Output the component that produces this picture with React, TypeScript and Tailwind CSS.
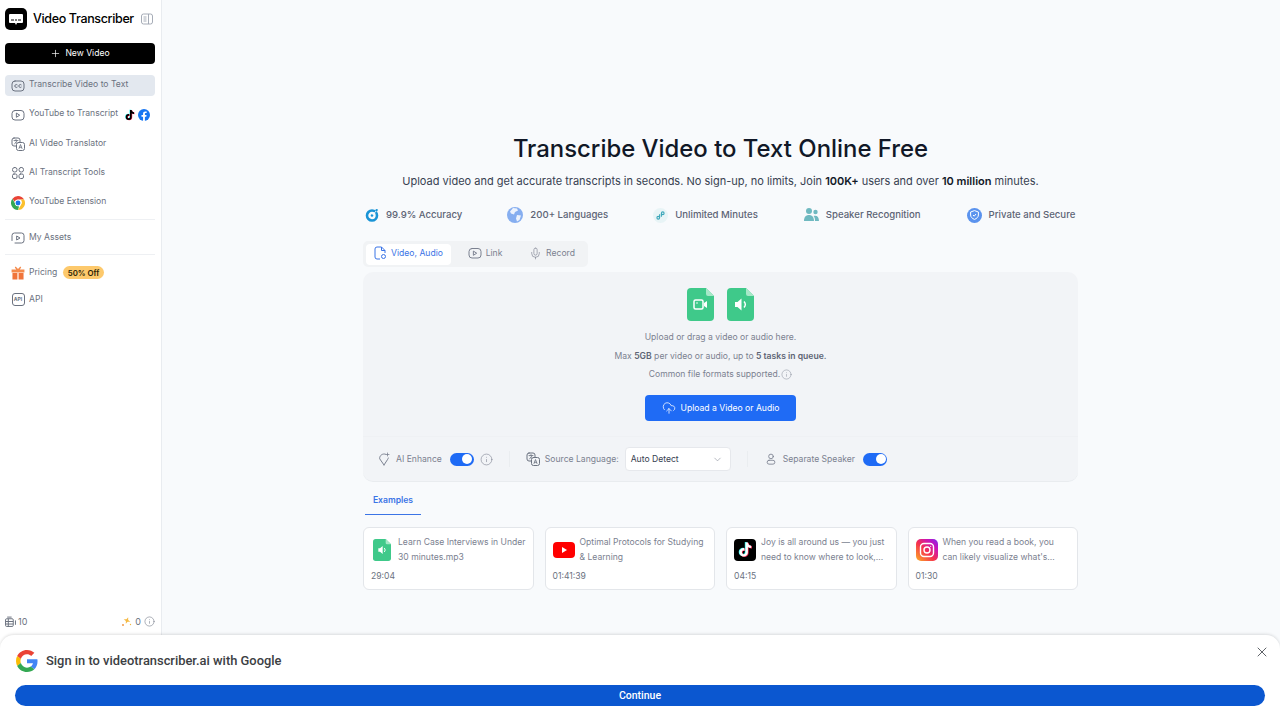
import React from "react";
import { Plus, X, ChevronDown, Info, Mic, CloudUpload } from "lucide-react";

const tiktokPath = "M12 2h3.400c.3 2.600 1.800 4.300 4.600 4.600V10c-1.800 0-3.300-.5-4.600-1.500V16a6 6 0 1 1-6-6c.4 0 .7 0 1 .1v3.500a2.600 2.600 0 1 0 1.600 2.400z";

const GoogleG = ({ size = 22 }: { size?: number }) => (
  <svg width={size} height={size} viewBox="0 0 48 48">
    <path fill="#EA4335" d="M24 9.500c3.540 0 6.710 1.220 9.210 3.600l6.850-6.850C35.900 2.380 30.470 0 24 0 14.620 0 6.510 5.380 2.560 13.220l7.980 6.190C12.430 13.720 17.740 9.500 24 9.500z" />
    <path fill="#4285F4" d="M46.980 24.550c0-1.570-.15-3.090-.38-4.550H24v9.020h12.940c-.58 2.960-2.260 5.480-4.780 7.180l7.730 6c4.510-4.180 7.090-10.360 7.090-17.650z" />
    <path fill="#FBBC05" d="M10.530 28.590c-.48-1.450-.76-2.990-.76-4.590s.27-3.140.76-4.590l-7.980-6.190C.92 16.460 0 20.120 0 24c0 3.880.92 7.540 2.560 10.780l7.970-6.190z" />
    <path fill="#34A853" d="M24 48c6.480 0 11.930-2.130 15.890-5.810l-7.730-6c-2.150 1.450-4.920 2.300-8.160 2.300-6.260 0-11.570-4.220-13.470-9.910l-7.980 6.190C6.510 42.620 14.620 48 24 48z" />
  </svg>
);

const TikTok = ({ size = 12, fill = "#000" }: { size?: number; fill?: string }) => (
  <svg width={size} height={size} viewBox="0 0 24 24">
    <path fill="#25F4EE" d={tiktokPath} transform="translate(-1 -.6)" />
    <path fill="#FE2C55" d={tiktokPath} transform="translate(1 .6)" />
    <path fill={fill} d={tiktokPath} />
  </svg>
);

const Facebook = () => (
  <svg width={12} height={12} viewBox="0 0 24 24">
    <circle cx="12" cy="12" r="12" fill="#1877F2" />
    <path fill="#fff" d="M16.600 15.500l.5-3.500h-3.300V9.800c0-1 .5-1.900 2-1.900h1.500V5c-.9-.1-1.800-.2-2.700-.2-2.700 0-4.500 1.700-4.500 4.600V12H7v3.500h3.100V24h3.700v-8.500z" />
  </svg>
);

const Chrome = () => (
  <svg width={14} height={14} viewBox="0 0 24 24">
    <path fill="#EA4335" d="M12 0a12 12 0 0 1 10.400 6H12a6 6 0 0 0-5.600 3.800L2.500 4.700A12 12 0 0 1 12 0z" />
    <path fill="#FBC02D" d="M22.400 6A12 12 0 0 1 12 24l4.900-8.700A6 6 0 0 0 16 6z" />
    <path fill="#34A853" d="M2.500 4.700l4.900 8.900a6 6 0 0 0 6.500 4.100L12 24A12 12 0 0 1 2.500 4.700z" />
    <circle cx="12" cy="12" r="5.400" fill="#fff" />
    <circle cx="12" cy="12" r="4.200" fill="#1A73E8" />
  </svg>
);

const Gift = () => (
  <svg width={14} height={14} viewBox="0 0 24 24">
    <path fill="#F58A4B" d="M8 1l4 4 4-4 1.500 1.500L15 6h8v5H1V6h8L6.500 2.500z" />
    <path fill="#F0743A" d="M2.500 12h8.500v11H2.500zM13 12h8.500v11H13z" />
  </svg>
);

const Line = ({ size = 14, children }: { size?: number; children: React.ReactNode }) => (
  <svg width={size} height={size} viewBox="0 0 14 14" fill="none" stroke="currentColor" strokeWidth="1" strokeLinecap="round" strokeLinejoin="round" className="shrink-0">
    {children}
  </svg>
);

const CcIcon = () => (
  <Line>
    <rect x="1" y="2" width="12" height="10" rx="3" />
    <path d="M6.200 5.800a1.500 1.500 0 1 0 0 2.400M10.200 5.800a1.500 1.500 0 1 0 0 2.400" />
  </Line>
);

const PlayBox = ({ size = 14 }: { size?: number }) => (
  <Line size={size}>
    <rect x="1" y="2.500" width="12" height="9.500" rx="3" />
    <path d="M5.700 5.300l3 1.900-3 1.900z" />
  </Line>
);

const TranslateIcon = ({ backing = "#fff" }: { backing?: string }) => (
  <Line>
    <rect x="1" y="1" width="8" height="8" rx="2" />
    <path d="M3 3.500h4M5 2.500v1M3.500 7l2.500-3M6.500 7L4.500 5" strokeWidth=".8" />
    <rect x="5.500" y="5.500" width="8" height="8" rx="2" fill={backing} />
    <path d="M8 11.500l1.500-4 1.500 4M8.500 10.300h2" strokeWidth=".8" />
  </Line>
);

const ToolsIcon = () => (
  <Line>
    <rect x="1.500" y="1.500" width="4.500" height="4.500" rx="2" />
    <rect x="8" y="1.500" width="4.500" height="4.500" rx="2" />
    <rect x="1.500" y="8" width="4.500" height="4.500" rx="1.500" />
    <rect x="8" y="8" width="4.500" height="4.500" rx="1.500" />
  </Line>
);

const AssetsIcon = () => (
  <Line>
    <path d="M1 9.500V4.500a2.500 2.500 0 0 1 2.500-2.500h7A2.500 2.500 0 0 1 13 4.500v5a2.500 2.500 0 0 1-2.500 2.500H4" />
    <path d="M6 5.200l3 1.800-3 1.800z" />
  </Line>
);

const PanelIcon = () => (
  <span className="ml-[7px] text-[#9ca3af]">
    <svg width={12} height={12} viewBox="0 0 12 12" fill="none" stroke="currentColor" strokeWidth=".9">
      <rect x=".5" y="1" width="11" height="10" rx="2" />
      <path d="M7.500 1v10M2.500 4h3M2.500 6h3M2.500 8h3" />
    </svg>
  </span>
);

const NavItem = ({ icon, label, active, lift, right }: { icon: React.ReactNode; label: string; active?: boolean; lift?: boolean; right?: React.ReactNode }) => (
  <div className={`flex h-[21px] items-center gap-[4px] rounded-[4px] px-[6px] ${active ? "bg-[#e3e8ef]" : ""}`}>
    <span className="flex h-[14px] w-[14px] shrink-0 items-center justify-center text-[#6b7280]">{icon}</span>
    <span className={`whitespace-nowrap text-[8.600px] leading-none text-[#6b7280] ${lift ? "pb-[2px]" : ""}`}>{label}</span>
    {right}
  </div>
);

const Feature = ({ icon, label, className = "" }: { icon: React.ReactNode; label: string; className?: string }) => (
  <div className={`flex items-center gap-[7px] ${className}`}>
    {icon}
    <span className="whitespace-nowrap text-[9.600px] font-medium text-[#5d6475]">{label}</span>
  </div>
);

const FileBadge = ({ children, small }: { children: React.ReactNode; small?: boolean }) => (
  <svg width={small ? 18 : 27} height={small ? 22 : 33} viewBox="0 0 27 33">
    <path fill="#3FC98A" d="M4 0h15l8 8v21a4 4 0 0 1-4 4H4a4 4 0 0 1-4-4V4a4 4 0 0 1 4-4z" />
    <path fill="#A6E8C8" d="M19 0l8 8h-6a2 2 0 0 1-2-2z" />
    {children}
  </svg>
);

const SpeakerGlyph = () => (
  <g fill="#fff">
    <path d="M8 14h2.500l4-3.500v12l-4-3.500H8z" />
    <path d="M17 13.500a4.500 4.500 0 0 1 0 6" stroke="#fff" strokeWidth="1.400" fill="none" />
  </g>
);

const Toggle = () => (
  <span className="flex h-[13px] w-[24px] items-center justify-end rounded-full bg-[#1f6bf5] pr-[1.500px]">
    <span className="h-[10px] w-[10px] rounded-full bg-white" />
  </span>
);

const ExampleCard = ({ icon, title, time }: { icon: React.ReactNode; title: string; time: string }) => (
  <div className="flex h-[63px] flex-1 flex-col justify-between rounded-[6px] border border-[#e3e6ea] bg-white pb-[8px] pl-[7px] pr-[6px] pt-[7px]">
    <div className="flex items-center gap-[5px]">
      <span className="flex w-[22px] shrink-0 justify-center">{icon}</span>
      <p className="text-[8.600px] leading-[14.500px] text-[#7b8190]">{title}</p>
    </div>
    <span className="text-[8.600px] leading-none text-[#6b7280]">{time}</span>
  </div>
);

export default function App() {
  return (
    <div className="relative flex h-[720px] w-[1280px] overflow-hidden bg-[#f8fafc] font-['Inter',sans-serif]">
      <aside className="flex h-full w-[162px] shrink-0 flex-col border-r border-[#e9ecf0] bg-white pb-[92px]">
        <div className="flex h-[36px] items-center pl-[5px] pt-[2px]">
          <span className="flex h-[22px] w-[22px] items-center justify-center rounded-[5px] bg-black">
            <svg width={14} height={11} viewBox="0 0 14 11">
              <path fill="#fff" d="M1 0h12a1 1 0 0 1 1 1v7a1 1 0 0 1-1 1H8l-1 2-1-2H1a1 1 0 0 1-1-1V1a1 1 0 0 1 1-1z" />
              <path stroke="#000" strokeWidth="1" d="M2 6h3M6 6h2M9 6h3" />
            </svg>
          </span>
          <span className="ml-[6px] whitespace-nowrap text-[12.500px] font-medium tracking-[-0.35px] text-black">Video Transcriber</span>
          <PanelIcon />
        </div>
        <div className="pl-[5px] pr-[6px]">
          <div className="mt-[7px] flex h-[21px] items-center justify-center gap-[4px] rounded-[4px] bg-black text-white">
            <Plus size={11} strokeWidth={1.500} />
            <span className="text-[8.600px]">New Video</span>
          </div>
          <div className="mt-[11px] flex flex-col gap-[8.250px]">
            <NavItem lift active icon={<CcIcon />} label="Transcribe Video to Text" />
            <NavItem
              lift
              icon={<PlayBox />}
              label="YouTube to Transcript"
              right={
                <span className="-mr-[1px] ml-auto flex items-center gap-[2px]">
                  <TikTok />
                  <Facebook />
                </span>
              }
            />
            <NavItem lift icon={<TranslateIcon />} label="AI Video Translator" />
            <NavItem lift icon={<ToolsIcon />} label="AI Transcript Tools" />
            <NavItem lift icon={<Chrome />} label="YouTube Extension" />
          </div>
          <div className="mb-[7px] mt-[6px] h-px bg-[#eef0f3]" />
          <NavItem icon={<AssetsIcon />} label="My Assets" />
          <div className="mb-[7px] mt-[6px] h-px bg-[#eef0f3]" />
          <NavItem
            icon={<Gift />}
            label="Pricing"
            right={<span className="ml-[2px] rounded-full bg-[#fdc96c] px-[4.500px] py-[1.500px] text-[7.800px] font-semibold leading-[10px] text-[#2a1d05]">50% Off</span>}
          />
          <div className="mt-[6px]">
            <NavItem
              icon={<span className="flex h-[13px] w-[13px] items-center justify-center rounded-[3px] border border-[#6b7280] text-[5px] font-bold">API</span>}
              label="API"
            />
          </div>
        </div>
        <div className="mt-auto flex items-center justify-between pl-[5px] pr-[6px] text-[9px] text-[#6b7280]">
          <span className="flex items-center gap-[2px]">
            <svg width={11} height={11} viewBox="0 0 10 10" fill="none" stroke="currentColor" strokeWidth=".9">
              <path d="M2 1h4" />
              <rect x=".5" y="2.500" width="7" height="7" rx="1" />
              <path d="M.5 5h7M.5 7.300h7M3 2.500v7" />
              <path d="M9.500 4v4" />
            </svg>
            10
          </span>
          <span className="flex items-center gap-[3px]">
            <svg width={11} height={11} viewBox="0 0 11 11" fill="#f5b942">
              <path d="M6 1l.9 2.600L9.500 4.500 6.900 5.400 6 8 5.100 5.400 2.500 4.500 5.100 3.600z" transform="rotate(20 6 4.500)" />
              <circle cx="2" cy="9" r="1" fill="#f29a4a" />
              <circle cx="9.500" cy="8.500" r=".7" />
            </svg>
            0
            <Info size={11} strokeWidth={1.200} />
          </span>
        </div>
      </aside>

      <main className="flex flex-1 justify-center pr-[1px] pt-[134px]">
        <div className="flex w-[715px] flex-col">
          <h1 className="text-center text-[23.900px] font-medium leading-[30px] text-[#111827]">Transcribe Video to Text Online Free</h1>
          <p className="mt-[8px] text-center text-[11px] leading-[18px] text-[#374151]">
            Upload video and get accurate transcripts in seconds. No sign-up, no limits, Join <b className="font-semibold text-[#111827]">100K+</b> users and over <b className="font-semibold text-[#111827]">10 million</b> minutes.
          </p>
          <div className="mt-[17px] flex items-center gap-[45px] pl-[2px]">
            <Feature
              label="99.9% Accuracy"
              icon={
                <svg width={14} height={14} viewBox="0 0 14 14">
                  <circle cx="7" cy="7.500" r="5" fill="none" stroke="#1a94d6" strokeWidth="2.600" />
                  <circle cx="7" cy="7.500" r="1.300" fill="#1a94d6" />
                  <path d="M8 6.500L12.500 1.500" stroke="#f8fafc" strokeWidth="1" />
                  <path d="M10.500 3l.3-2 2 .3-.3 1.900z" fill="#1a94d6" />
                </svg>
              }
            />
            <Feature
              label="200+ Languages"
              icon={
                <svg width={16} height={16} viewBox="0 0 16 16">
                  <circle cx="8" cy="8" r="8" fill="#86aef0" />
                  <path fill="#fff" d="M6 1l4 .5 1 2-3 1.500-1 2.500-3-1-1-2zM10 8l4 .5-1.500 4.500-2.500 1.500-1-3z" opacity=".85" />
                </svg>
              }
            />
            <Feature
              label="Unlimited Minutes"
              icon={
                <span className="flex h-[15px] w-[15px] items-center justify-center rounded-full bg-[#e8f4f6]">
                  <svg width={9} height={9} viewBox="0 0 10 10" fill="none" stroke="#3aa6b9" strokeWidth="1.200">
                    <circle cx="2.500" cy="7.500" r="1.500" />
                    <circle cx="7.500" cy="2.500" r="1.500" />
                    <path d="M4 7.500V3.500M6 2.500v4" />
                  </svg>
                </span>
              }
            />
            <Feature
              className="ml-[1px]"
              label="Speaker Recognition"
              icon={
                <svg width={15} height={14} viewBox="0 0 15 14" fill="#6fb9c0">
                  <circle cx="5" cy="3" r="3" />
                  <circle cx="11.500" cy="4" r="2.200" />
                  <path d="M0 13c0-4 2-6 5-6s5 2 5 6zM11 13c0-2.500-.5-4-1.500-5 3-1 5.500.5 5.500 5z" />
                </svg>
              }
            />
            <Feature
              className="ml-[1px]"
              label="Private and Secure"
              icon={
                <span className="flex h-[15px] w-[15px] items-center justify-center rounded-full bg-[#5b93ee]">
                  <svg width={9} height={10} viewBox="0 0 9 10" fill="none" stroke="#fff" strokeWidth="1">
                    <path d="M4.500.6L8.400 2v3c0 2-1.600 3.500-3.900 4.400C2.200 8.500.6 7 .6 5V2z" />
                    <path d="M3 5l1.200 1.200L6 4" />
                  </svg>
                </span>
              }
            />
          </div>

          <div className="mt-[18px] flex h-[26px] w-[225px] items-center self-start rounded-[5px] bg-[#f1f3f5] px-[3px] text-[8.600px]">
            <span className="flex h-[21px] w-[85px] items-center justify-center gap-[4px] rounded-[4px] bg-white pb-[2px] text-[#3b74e6]">
              <svg width={13} height={14} viewBox="0 0 13 14" fill="none" stroke="currentColor" strokeWidth="1" strokeLinejoin="round">
                <path d="M6 13H3a2 2 0 0 1-2-2V3a2 2 0 0 1 2-2h4.500L11 4.500V7" />
                <path d="M7.500 1v3.500H11" />
                <circle cx="9.500" cy="10.500" r="2" />
              </svg>
              Video, Audio
            </span>
            <span className="flex h-[21px] w-[68px] items-center justify-center gap-[4px] pb-[2px] text-[#7b8190]">
              <PlayBox />
              Link
            </span>
            <span className="flex h-[21px] w-[66px] items-center justify-center gap-[4px] pb-[2px] text-[#7b8190]">
              <Mic size={13} strokeWidth={1.200} />
              Record
            </span>
          </div>

          <div className="mt-[5px] rounded-[10px] border-b border-[#e9ecef] bg-[#f2f4f7]">
            <div className="flex h-[165px] flex-col items-center border-b border-[#eff1f4] pt-[16px]">
              <div className="flex gap-[13px]">
                <FileBadge>
                  <rect x="7" y="12" width="9" height="9" rx="1.500" fill="none" stroke="#fff" strokeWidth="1.500" />
                  <circle cx="10" cy="15" r=".8" fill="#fff" />
                  <path fill="#fff" d="M17 15l3-2v7l-3-2z" />
                </FileBadge>
                <FileBadge>
                  <SpeakerGlyph />
                </FileBadge>
              </div>
              <p className="mt-[9px] text-[8.600px] leading-[14px] text-[#7b8190]">Upload or drag a video or audio here.</p>
              <p className="mt-[5px] text-[8.600px] leading-[14px] text-[#7b8190]">
                Max <b className="font-semibold text-[#5d6475]">5GB</b> per video or audio, up to <b className="font-semibold text-[#5d6475]">5 tasks in queue.</b>
              </p>
              <p className="mt-[4px] flex items-center gap-[1px] text-[8.600px] leading-[14px] text-[#7b8190]">
                Common file formats supported.
                <Info size={11} strokeWidth={1} />
              </p>
              <div className="mt-[14px] flex h-[26px] w-[151px] items-center justify-center gap-[5px] rounded-[4px] bg-[#1f6bf5] text-[8.600px] text-white">
                <CloudUpload size={14} strokeWidth={1.300} />
                Upload a Video or Audio
              </div>
            </div>
            <div className="flex h-[44px] items-center pl-[14px] text-[8.600px] text-[#7b8190]">
              <Line>
                <path d="M7 13L2.700 6.800a4.300 4.300 0 0 1 5.800-4.600" />
                <path d="M11.300 6a4.300 4.300 0 0 1-.6 1.300L7 13" />
                <path d="M10.500 1v3M9 2.500h3" strokeWidth=".8" />
              </Line>
              <span className="ml-[5px]">AI Enhance</span>
              <span className="ml-[8px]"><Toggle /></span>
              <Info size={13} strokeWidth={1.100} className="ml-[6px]" />
              <span className="ml-[16px] h-[16px] w-px bg-[#eaedf0]" />
              <span className="ml-[16px] mr-[5px] text-[#6b7280]"><TranslateIcon backing="#f2f4f7" /></span>
              <span>Source Language:</span>
              <span className="ml-[6px] flex h-[24px] w-[106px] items-center justify-between rounded-[4px] border border-[#e6e8ec] bg-white pl-[5px] pr-[7px] text-[#374151]">
                Auto Detect
                <ChevronDown size={11} strokeWidth={1.200} className="text-[#7b8190]" />
              </span>
              <span className="ml-[16px] h-[16px] w-px bg-[#eaedf0]" />
              <span className="ml-[17px] mr-[6px]">
                <Line size={12}>
                  <circle cx="7" cy="4" r="2.700" />
                  <rect x="2.500" y="8.500" width="9" height="4.500" rx="2.200" />
                </Line>
              </span>
              <span>Separate Speaker</span>
              <span className="ml-[8px]"><Toggle /></span>
            </div>
          </div>

          <div className="ml-[2px] mt-[4px] flex h-[29px] w-[56px] items-center justify-center border-b border-[#3b74e6] text-[8.600px] font-semibold text-[#3b74e6]">Examples</div>

          <div className="mt-[12px] flex gap-[11px]">
            <ExampleCard icon={<FileBadge small><SpeakerGlyph /></FileBadge>} title="Learn Case Interviews in Under 30 minutes.mp3" time="29:04" />
            <ExampleCard
              icon={
                <svg width={22} height={16} viewBox="0 0 22 16">
                  <rect width="22" height="16" rx="4" fill="#f00" />
                  <path fill="#fff" d="M9 5l5 3-5 3z" />
                </svg>
              }
              title="Optimal Protocols for Studying & Learning"
              time="01:41:39"
            />
            <ExampleCard
              icon={
                <span className="flex h-[22px] w-[22px] items-center justify-center rounded-[4px] bg-black">
                  <TikTok size={17} fill="#fff" />
                </span>
              }
              title="Joy is all around us — you just need to know where to look,..."
              time="04:15"
            />
            <ExampleCard
              icon={
                <span className="flex h-[22px] w-[22px] items-center justify-center rounded-[5px] bg-[linear-gradient(45deg,#fdb022_0%,#f5304f_45%,#c913b9_75%,#7a2df0_100%)]">
                  <svg width={16} height={16} viewBox="0 0 16 16" fill="none" stroke="#fff" strokeWidth="1.400">
                    <rect x="1.500" y="1.500" width="13" height="13" rx="3.500" />
                    <circle cx="8" cy="8" r="3" />
                    <circle cx="11.700" cy="4.300" r=".6" fill="#fff" stroke="none" />
                  </svg>
                </span>
              }
              title="When you read a book, you can likely visualize what's..."
              time="01:30"
            />
          </div>
        </div>
      </main>

      <div className="absolute bottom-0 left-0 right-0 h-[85px] rounded-t-[14px] bg-white font-['Roboto',sans-serif] shadow-[0_-1px_3px_rgba(0,0,0,0.12)]">
        <div className="flex h-[50px] items-center pl-[16px] pt-[1px]">
          <GoogleG />
          <span className="ml-[8px] text-[12.900px] font-medium text-[#3c4043]">Sign in to videotranscriber.ai with Google</span>
          <X size={16} strokeWidth={1.500} className="absolute right-[10px] top-[9px] text-[#5f6368]" />
        </div>
        <div className="mx-[15px] flex h-[21px] items-center justify-center rounded-full bg-[#0b57d0] text-[10.500px] font-medium text-white">Continue</div>
      </div>
    </div>
  );
}
